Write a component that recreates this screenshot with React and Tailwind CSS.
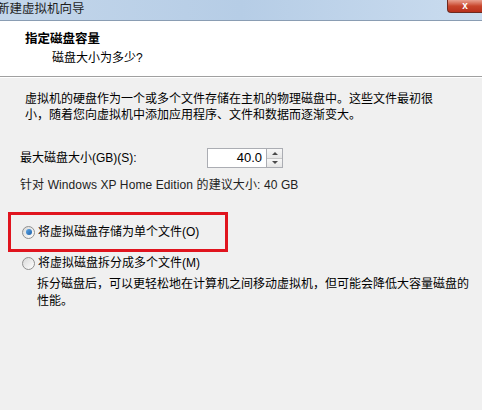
import React from 'react'

const font = { fontFamily: '"Liberation Sans", "Noto Sans CJK SC", sans-serif' }

function Radio({ checked }) {
  return (
    <span className="relative inline-block w-[13px] h-[13px] rounded-full border border-[#8f8f8f] bg-gradient-to-br from-[#d8d8d8] to-[#ffffff] shrink-0">
      {checked && (
        <span className="absolute left-[2.5px] top-[2.5px] w-[6px] h-[6px] rounded-full bg-gradient-to-br from-[#5fa8e8] to-[#1b5fa8]" />
      )}
    </span>
  )
}

export default function App() {
  return (
    <div className="w-[482px] h-[410px] overflow-hidden bg-[#f0f0f0] text-[12px] text-black" style={font}>
      {/* title bar */}
      <div className="relative h-[21px] bg-gradient-to-r from-[#c3d6ea] via-[#b6cde6] to-[#cadcef] border-b border-[#8a9db3]">
        <span className="absolute left-[-3px] top-[2px] text-[12.5px] leading-[15px] text-[#1e1e1e]">新建虚拟机向导</span>
        <div className="absolute right-0 top-0 w-[35px] h-[13px] rounded-bl-[4px] bg-gradient-to-b from-[#e8a090] via-[#c8452c] to-[#b8301c] border-l border-b border-[#6e2a20] flex items-center justify-center">
          <span className="text-white text-[10px] font-bold leading-none">x</span>
        </div>
      </div>

      {/* header */}
      <div className="h-[56px] bg-white border-b border-[#a0a0a0] pl-[25px] pt-[10px]">
        <div className="font-bold text-[12.5px] leading-[16px]">指定磁盘容量</div>
        <div className="pl-[27px] mt-[3px] leading-[16px]">磁盘大小为多少?</div>
      </div>
      <div className="h-px bg-white" />

      {/* body */}
      <div className="pl-[25px] pt-[13px] leading-[16px]">
        <div>虚拟机的硬盘作为一个或多个文件存储在主机的物理磁盘中。这些文件最初很</div>
        <div>小，随着您向虚拟机中添加应用程序、文件和数据而逐渐变大。</div>
      </div>

      <div className="flex items-center pl-[20px] mt-[25px] h-[20px]">
        <span className="w-[187px] leading-[16px]">最大磁盘大小(GB)(S):</span>
        <div className="flex items-stretch h-[20px]">
          <div className="w-[60px] bg-white border border-[#abadb3] flex items-center justify-end pr-[4px] text-[13px]">40.0</div>
          <div className="flex flex-col w-[16px] border border-l-0 border-[#abadb3] bg-[#f4f4f4]">
            <div className="flex-1 flex items-center justify-center border-b border-[#c8c8c8] bg-gradient-to-b from-[#f7f7f7] to-[#e6e6e6]">
              <span className="block w-0 h-0 border-l-[3px] border-r-[3px] border-b-[3px] border-l-transparent border-r-transparent border-b-[#4a4a4a]" />
            </div>
            <div className="flex-1 flex items-center justify-center bg-gradient-to-b from-[#f7f7f7] to-[#e6e6e6]">
              <span className="block w-0 h-0 border-l-[3px] border-r-[3px] border-t-[3px] border-l-transparent border-r-transparent border-t-[#4a4a4a]" />
            </div>
          </div>
        </div>
      </div>

      <div className="pl-[20px] mt-[9px] leading-[16px] text-[#222] tracking-[0.1px]">针对 Windows XP Home Edition 的建议大小: 40 GB</div>

      {/* options */}
      <div className="ml-[8px] mt-[19px] w-[220px] h-[40px] border-[3px] border-[#e0141e] flex items-center pl-[11px] gap-[3px]">
        <Radio checked />
        <span className="leading-[16px]">将虚拟磁盘存储为单个文件(O)</span>
      </div>
      <div className="flex items-center pl-[22px] mt-[3px] gap-[3px] h-[16px]">
        <Radio />
        <span className="leading-[16px]">将虚拟磁盘拆分成多个文件(M)</span>
      </div>
      <div className="pl-[37px] mt-[5px] leading-[17px]">
        <div>拆分磁盘后，可以更轻松地在计算机之间移动虚拟机，但可能会降低大容量磁盘的</div>
        <div>性能。</div>
      </div>
    </div>
  )
}
